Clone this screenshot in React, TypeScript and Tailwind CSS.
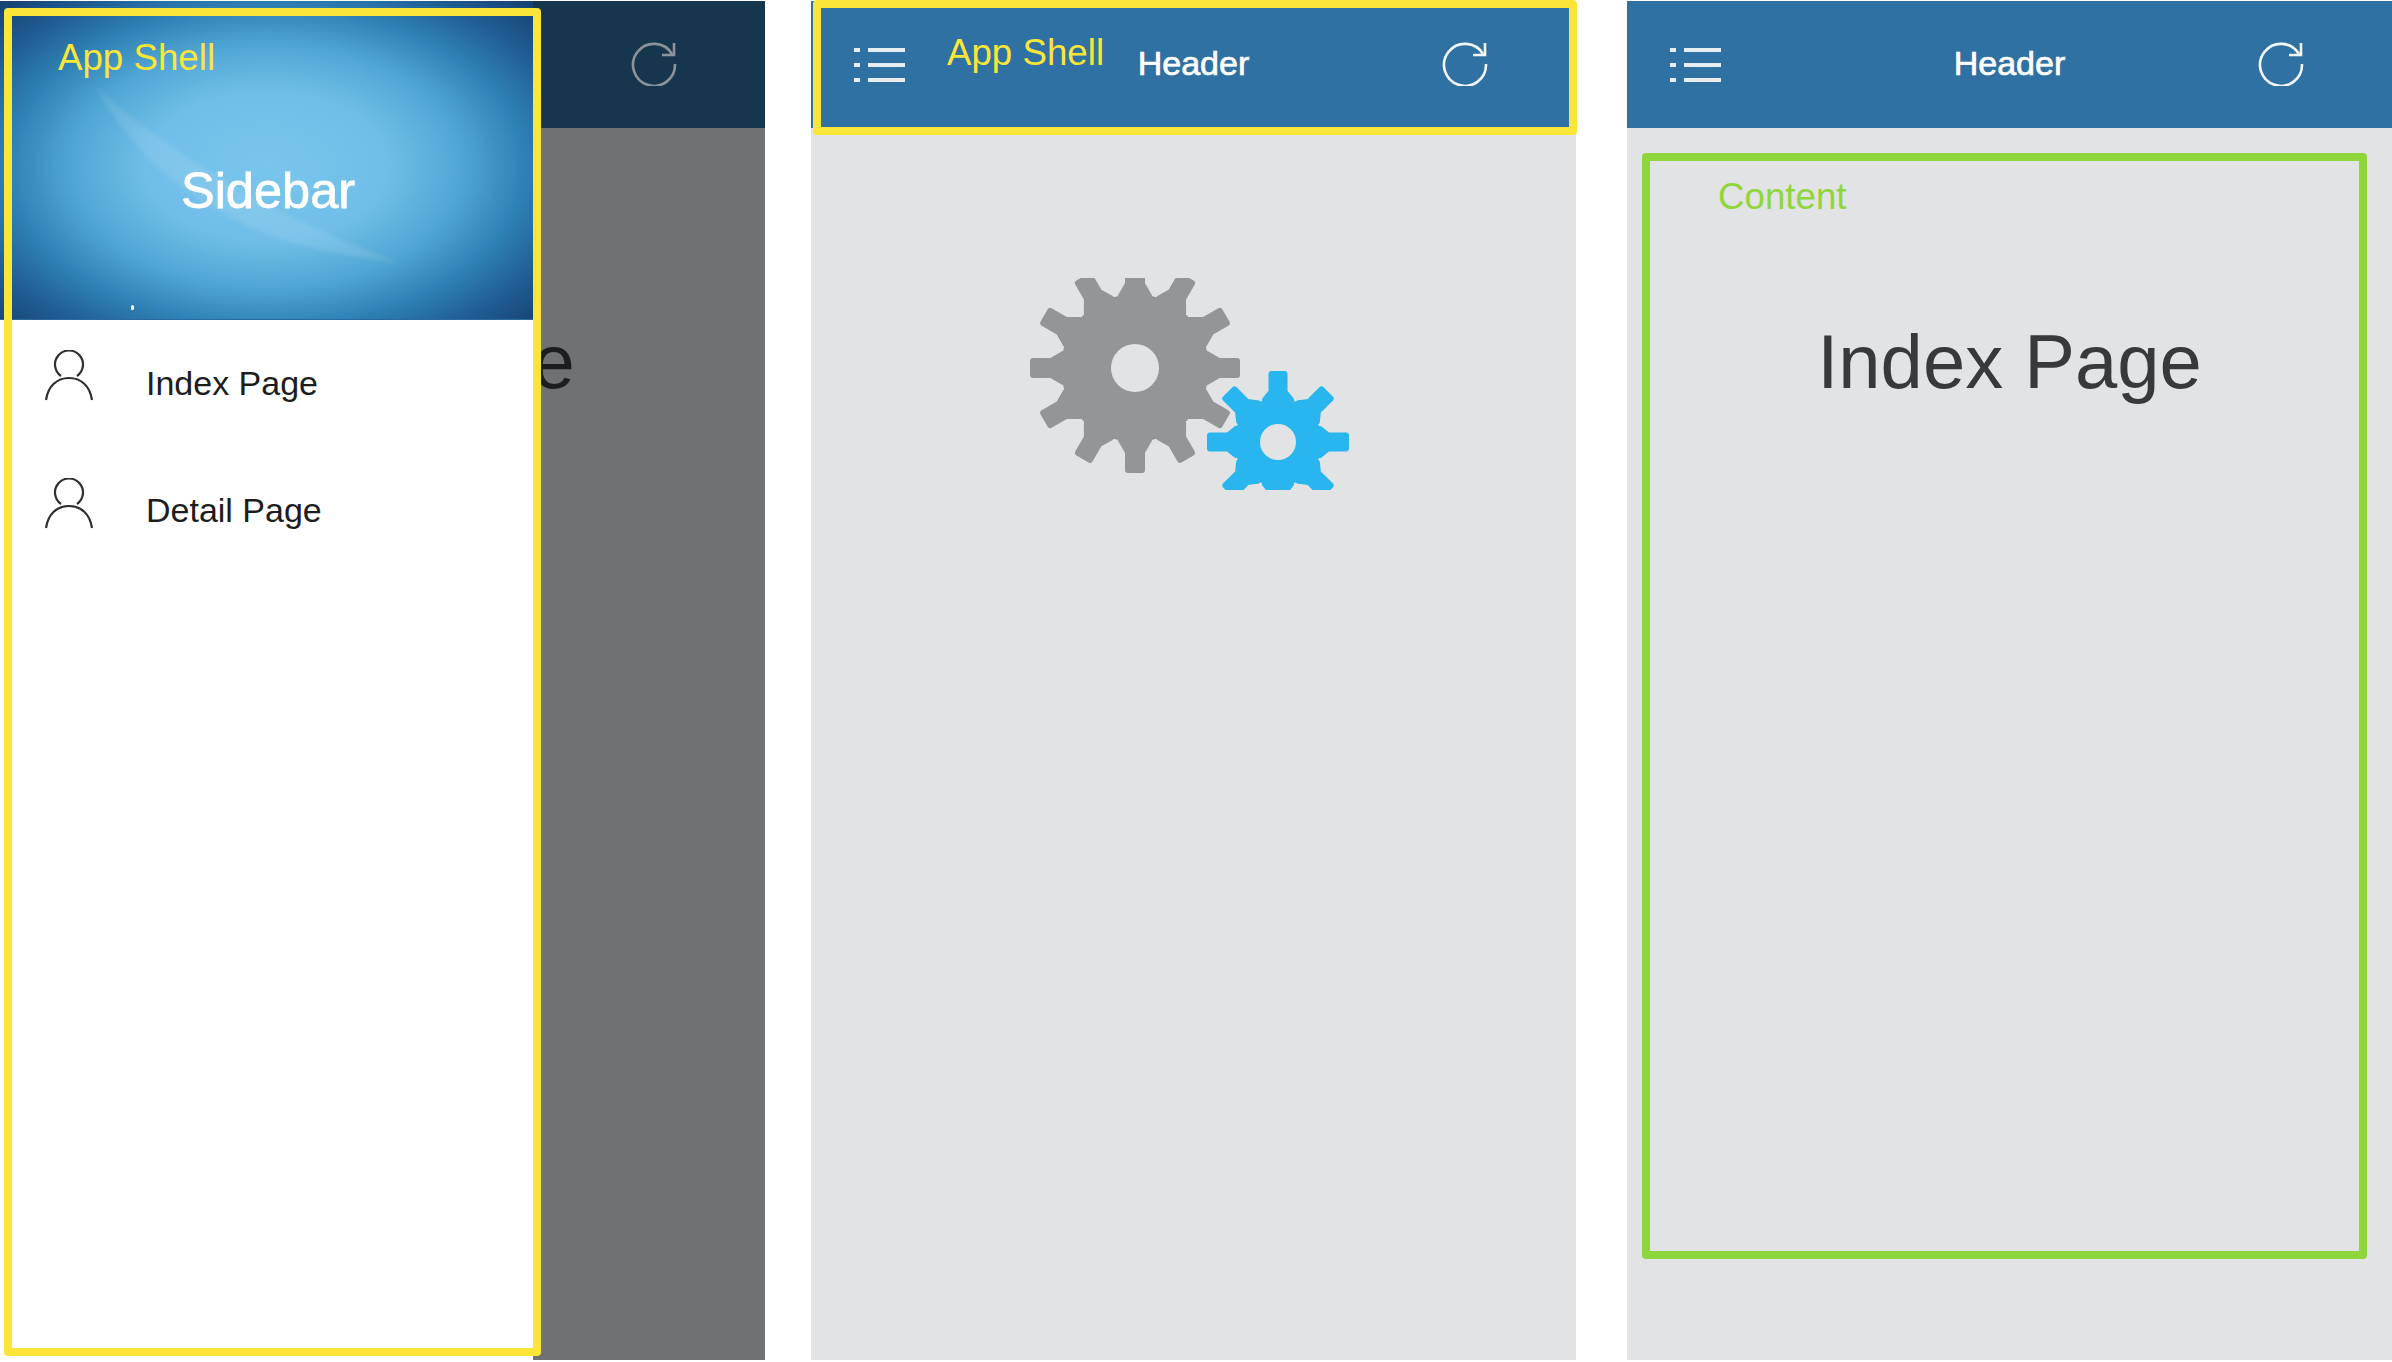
import type { ReactNode } from 'react'

function ListIcon() {
  return (
    <svg className="w-[51px] h-[36px]" viewBox="0 0 51 36" fill="none" stroke="#e6eef4" strokeWidth="3.8">
      <path d="M0 3h6M14 3h37M0 18h6M14 18h37M0 33h6M14 33h37" />
    </svg>
  )
}

function RefreshIcon({ color }: { color: string }) {
  return (
    <svg className="w-[46px] h-[46px] mb-[3px]" viewBox="0 0 46 46" fill="none" stroke={color} strokeWidth="2.600">
      <path d="M41 14A21 21 0 1 0 44 24" />
      <path d="M43 3V15H31" />
    </svg>
  )
}

function PersonIcon() {
  return (
    <svg className="w-[48px] h-[51px] mb-[16px]" viewBox="0 0 48 51" fill="none" stroke="#2e2e2e" strokeWidth="2.200">
      <path d="M16 26A14 14 0 1 1 32 26" />
      <path d="M1 50C3 36 12 28 24 28C36 28 45 36 47 50" />
    </svg>
  )
}

interface GearProps {
  cx: number
  cy: number
  body: number
  hole: number
  teeth: number
  color: string
  // half widths and distances from the centre, base to tip of a tooth
  flare: [number, number]
  neck: [number, number]
  tip: [number, number]
  stroke?: number
}

function Gear({ cx, cy, body, hole, teeth, color, flare, neck, tip, stroke = 6 }: GearProps) {
  const left = [flare, neck, tip].map(([w, d]) => `${cx - w},${cy - d}`).join(' ')
  const right = [tip, neck, flare].map(([w, d]) => `${cx + w},${cy - d}`).join(' ')
  return (
    <g>
      {Array.from({ length: teeth }).map((_, i) => (
        <polygon
          key={i}
          points={`${left} ${right}`}
          fill={color}
          stroke={color}
          strokeWidth={stroke}
          strokeLinejoin="round"
          transform={`rotate(${(360 / teeth) * i} ${cx} ${cy})`}
        />
      ))}
      <circle cx={cx} cy={cy} r={body} fill={color} />
      {hole > 0 && <circle cx={cx} cy={cy} r={hole} fill="#e2e3e5" />}
    </g>
  )
}

function Gears() {
  const small = { cx: 258, cy: 164, teeth: 8, flare: [13, 42] as [number, number], neck: [6.5, 50] as [number, number], tip: [6.5, 68] as [number, number] }
  return (
    <svg className="w-[340px] h-[212px]" viewBox="0 0 340 212">
      <Gear cx={115} cy={90} body={74} hole={24} teeth={12} color="#939597" flare={[14, 72]} neck={[7, 84]} tip={[7, 102]} />
      <Gear {...small} body={47} hole={0} color="#e2e3e5" stroke={12} />
      <Gear {...small} body={44} hole={18} color="#29b5ee" />
    </svg>
  )
}

function Header({ bg, iconColor }: { bg: string; iconColor: string }) {
  return (
    <header className={`h-[127px] shrink-0 grid grid-cols-[1fr_auto_1fr] items-center px-[43px] ${bg}`}>
      <ListIcon />
      <h1 className="text-[34px] leading-none text-white mb-[3px] [-webkit-text-stroke:0.7px_white]">Header</h1>
      <div className="justify-self-end mr-[45px] flex">
        <RefreshIcon color={iconColor} />
      </div>
    </header>
  )
}

function IndexTitle({ color }: { color: string }) {
  return <h2 className={`pt-[196px] text-center text-[76px] leading-none ${color}`}>Index Page</h2>
}

function MenuRow({ label }: { label: string }) {
  return (
    <li className="h-[127.5px] flex items-center pl-[45px] gap-[53px]">
      <PersonIcon />
      <span className="text-[34px] text-[#1d1d1d] mb-[1px]">{label}</span>
    </li>
  )
}

function Sidebar() {
  return (
    <aside className="absolute left-0 top-0 bottom-0 w-[533px] bg-white">
      <div className="relative h-[319px] flex items-center justify-center pt-[63px] pl-[3px] bg-[radial-gradient(ellipse_at_50%_52%,#79c5ec_0%,#70bee8_32%,#4fa6d4_52%,#2f82b5_68%,#1f5c92_84%,#173f72_100%)] border-b border-[#2a6aa0]">
        <svg className="absolute inset-0 w-full h-full blur-[2px]" viewBox="0 0 533 319">
          <path d="M95 86C150 186 250 250 400 262C300 226 190 170 95 86Z" fill="#ffffff" fillOpacity="0.1" />
        </svg>
        <span className="absolute left-[131px] top-[304px] w-[3px] h-[5px] rounded-full bg-white" />
        <span className="relative text-[50.5px] leading-none text-white [-webkit-text-stroke:0.8px_white]">Sidebar</span>
      </div>
      <ul>
        <MenuRow label="Index Page" />
        <MenuRow label="Detail Page" />
      </ul>
    </aside>
  )
}

function Frame({ className, children }: { className: string; children: ReactNode }) {
  return (
    <div className={`absolute border-8 rounded-[4px] text-[36.7px] leading-none pointer-events-none ${className}`}>
      {children}
    </div>
  )
}

export default function App() {
  return (
    <div className="w-[2392px] h-[1362px] pt-px pb-[2px] flex bg-white overflow-hidden font-['Liberation_Sans',Arial,sans-serif]">
      <section className="relative w-[765px] shrink-0 bg-[#707172]">
        <Header bg="bg-[#16364e]" iconColor="#8c949a" />
        <IndexTitle color="text-[#1c1d1e]" />
        <Sidebar />
        <Frame className="left-[4px] top-[7px] w-[537px] h-[1348px] border-[#fbe539] text-[#fbe539] pl-[46px] pt-[24px]">
          App Shell
        </Frame>
      </section>

      <section className="relative w-[765px] shrink-0 ml-[46px] bg-[#e2e3e5]">
        <Header bg="bg-[#2f71a3]" iconColor="#f2f6f9" />
        <div className="pt-[150px] pl-[209px]">
          <Gears />
        </div>
        <Frame className="left-[2px] top-[-1px] w-[764px] h-[135px] border-[#fbe539] text-[#fbe539] pl-[126px] pt-[27px]">
          App Shell
        </Frame>
      </section>

      <section className="relative flex-1 ml-[51px] bg-[#e2e3e5]">
        <Header bg="bg-[#2f71a3]" iconColor="#f2f6f9" />
        <IndexTitle color="text-[#38393b]" />
        <Frame className="left-[15px] top-[152px] w-[725px] h-[1106px] border-[#8fd63c] text-[#8fd63c] pl-[68px] pt-[18px]">
          Content
        </Frame>
      </section>
    </div>
  )
}
